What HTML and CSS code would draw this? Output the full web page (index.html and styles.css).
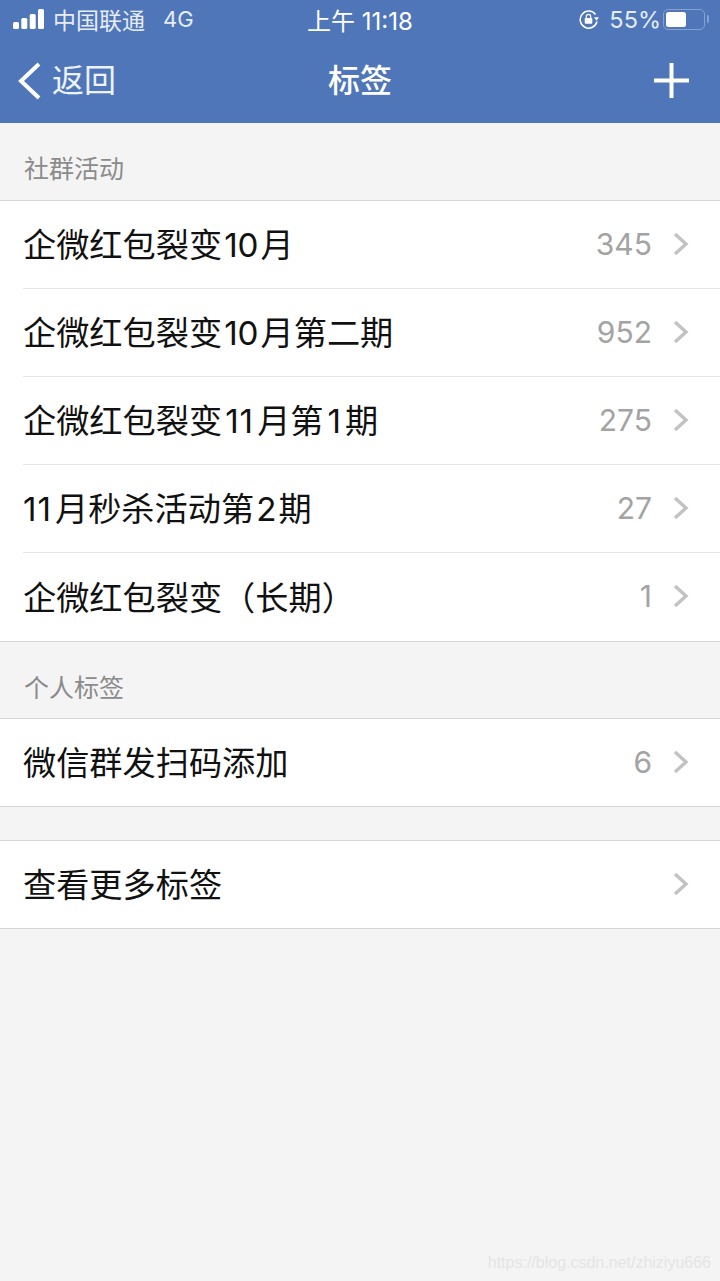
FILE: index.html
```html
<!DOCTYPE html>
<html lang="zh-CN">
<head>
<meta charset="utf-8">
<title>标签</title>
<link rel="stylesheet" href="styles.css">
</head>
<body>
<div class="page">
  <header class="header">
    <div class="status">
      <div class="status-side">
        <svg class="signal" width="31" height="20" viewBox="0 0 31 20"><rect x="0" y="13" width="6" height="7" rx="1.500"/><rect x="8.300" y="9" width="6" height="11" rx="1.500"/><rect x="16.700" y="5" width="6" height="15" rx="1.500"/><rect x="25" y="0" width="6" height="20" rx="1.500"/></svg>
        <span class="carrier">中国联通</span>
        <span class="net">4G</span>
      </div>
      <div class="clock">上午 11:18</div>
      <div class="status-side status-right">
        <svg class="lock" width="20" height="20" viewBox="0 0 20 20"><path d="M16.500 5.500A8.500 8.500 0 1 0 18 12.500" fill="none" stroke="#fff" stroke-width="1.500"/><path d="M15 8.200h5l-2.500 3.600z" fill="#fff"/><rect x="5.700" y="9" width="7.600" height="5.800" rx="1" fill="#fff"/><path d="M7.300 9V7.600a2.200 2.200 0 0 1 4.400 0V9" fill="none" stroke="#fff" stroke-width="1.200"/></svg>
        <span class="pct">55%</span>
        <span class="battery"><span class="battery-fill"></span></span>
        <span class="battery-cap"></span>
      </div>
    </div>
    <nav class="nav">
      <div class="back">
        <svg width="26" height="38" viewBox="0 0 26 38"><path d="M22 2 4 19l18 17" fill="none" stroke="#fff" stroke-width="4"/></svg>
        <span class="nav-text">返回</span>
      </div>
      <div class="title nav-text">标签</div>
      <div class="add">
        <svg width="35" height="35" viewBox="0 0 35 35"><path d="M17.500 0v35M0 17.500h35" stroke="#fff" stroke-width="4"/></svg>
      </div>
    </nav>
  </header>

  <div class="section-label">社群活动</div>
  <ul class="list">
    <li class="row"><span class="name">企微红包裂变<span class="num">10</span>月</span><span class="count">345</span><svg class="chev" width="16" height="24" viewBox="0 0 16 24"><path d="M2 2l11 10L2 22" fill="none" stroke="#c2c2c2" stroke-width="3.400"/></svg></li>
    <li class="row"><span class="name">企微红包裂变<span class="num">10</span>月第二期</span><span class="count">952</span><svg class="chev" width="16" height="24" viewBox="0 0 16 24"><path d="M2 2l11 10L2 22" fill="none" stroke="#c2c2c2" stroke-width="3.400"/></svg></li>
    <li class="row"><span class="name">企微红包裂变<span class="num num-ones">11</span>月第<span class="num num-one">1</span>期</span><span class="count">275</span><svg class="chev" width="16" height="24" viewBox="0 0 16 24"><path d="M2 2l11 10L2 22" fill="none" stroke="#c2c2c2" stroke-width="3.400"/></svg></li>
    <li class="row"><span class="name"><span class="num num-ones num-start">11</span>月秒杀活动第<span class="num">2</span>期</span><span class="count">27</span><svg class="chev" width="16" height="24" viewBox="0 0 16 24"><path d="M2 2l11 10L2 22" fill="none" stroke="#c2c2c2" stroke-width="3.400"/></svg></li>
    <li class="row"><span class="name">企微红包裂变（长期）</span><span class="count">1</span><svg class="chev" width="16" height="24" viewBox="0 0 16 24"><path d="M2 2l11 10L2 22" fill="none" stroke="#c2c2c2" stroke-width="3.400"/></svg></li>
  </ul>

  <div class="section-label section-label-tight">个人标签</div>
  <ul class="list">
    <li class="row row-short"><span class="name">微信群发扫码添加</span><span class="count">6</span><svg class="chev" width="16" height="24" viewBox="0 0 16 24"><path d="M2 2l11 10L2 22" fill="none" stroke="#c2c2c2" stroke-width="3.400"/></svg></li>
  </ul>

  <ul class="list list-more">
    <li class="row row-short"><span class="name">查看更多标签</span><svg class="chev" width="16" height="24" viewBox="0 0 16 24"><path d="M2 2l11 10L2 22" fill="none" stroke="#c2c2c2" stroke-width="3.400"/></svg></li>
  </ul>

  <div class="watermark">https://blog.csdn.net/zhiziyu666</div>
</div>
</body>
</html>
```
FILE: styles.css
```css
* { box-sizing: border-box; }
html, body { margin: 0; padding: 0; }
body {
  background: #f4f4f4;
  font-family: Inter, "Noto Sans CJK SC", sans-serif;
}
.page {
  width: 720px;
  height: 1281px;
  position: relative;
  overflow: hidden;
  background: #f4f4f4;
}
.header {
  height: 123px;
  background: #4f76b8;
  color: #fff;
  display: flex;
  flex-direction: column;
}
.status {
  height: 38px;
  display: grid;
  grid-template-columns: 1fr auto 1fr;
  align-items: center;
  padding: 0 13px;
  font-size: 22px;
}
.status-side {
  display: flex;
  align-items: center;
}
.signal { fill: #fff; margin-right: 9px; }
.carrier { color: #e6ecf6; font-size: 23px; }
.net { color: #e6ecf6; margin-left: 18px; font-size: 22px; }
.clock { font-size: 24px; }
.status-right { justify-content: flex-end; margin-right: -2px; }
.lock { margin-right: 10px; }
.pct { font-size: 23.500px; color: #e6ecf6; margin-right: 2px; }
.battery {
  width: 42px;
  height: 21px;
  border: 1.500px solid #86a2d0;
  border-radius: 5px;
  padding: 2px;
  display: flex;
}
.battery-fill { width: 20px; background: #fff; border-radius: 2.500px; }
.battery-cap { width: 2px; height: 8px; margin-left: 2px; background: #86a2d0; border-radius: 0 2px 2px 0; }
.nav {
  flex: 1;
  display: grid;
  grid-template-columns: 1fr auto 1fr;
  align-items: center;
  padding: 0 17px;
}
.nav-text { padding-bottom: 5px; }
.back { display: flex; align-items: center; gap: 9px; font-size: 32px; color: #eef2f9; }
.title { font-size: 32px; font-weight: 500; }
.add { display: flex; justify-content: flex-end; margin-right: 14px; }
.add svg { display: block; }
.section-label {
  height: 77px;
  padding: 30px 0 0 24px;
  font-size: 25px;
  line-height: 32px;
  color: #8b8b8b;
}
.section-label-tight { height: 76px; }
.list {
  list-style: none;
  margin: 0;
  padding: 0;
  background: #fff;
  border-top: 1px solid #d6d6d6;
  border-bottom: 1px solid #d6d6d6;
}
.list-more { margin-top: 33px; }
.row {
  height: 88px;
  margin-left: 23px;
  padding-right: 31px;
  padding-bottom: 2px;
  display: flex;
  align-items: center;
  border-bottom: 1px solid #e8e8e8;
}
.row:last-child { border-bottom: 0; }
.row-short { height: 87px; }
.name { flex: 1; font-size: 33.200px; color: #111; white-space: nowrap; padding-bottom: 2px; }
.num { margin: 0 2px; }
.num-ones { margin: 0 3px; letter-spacing: 1px; }
.num-one { margin: 0 4px; }
.num-start { margin-left: 0; }
.count { font-size: 30px; color: #a3a3a3; margin-right: 21px; }
.chev { display: block; flex: none; }
.watermark {
  position: absolute;
  right: 9px;
  top: 1252px;
  font-family: "Liberation Sans", sans-serif;
  font-size: 16px;
  line-height: 22px;
  color: #e4e4e4;
}
```
